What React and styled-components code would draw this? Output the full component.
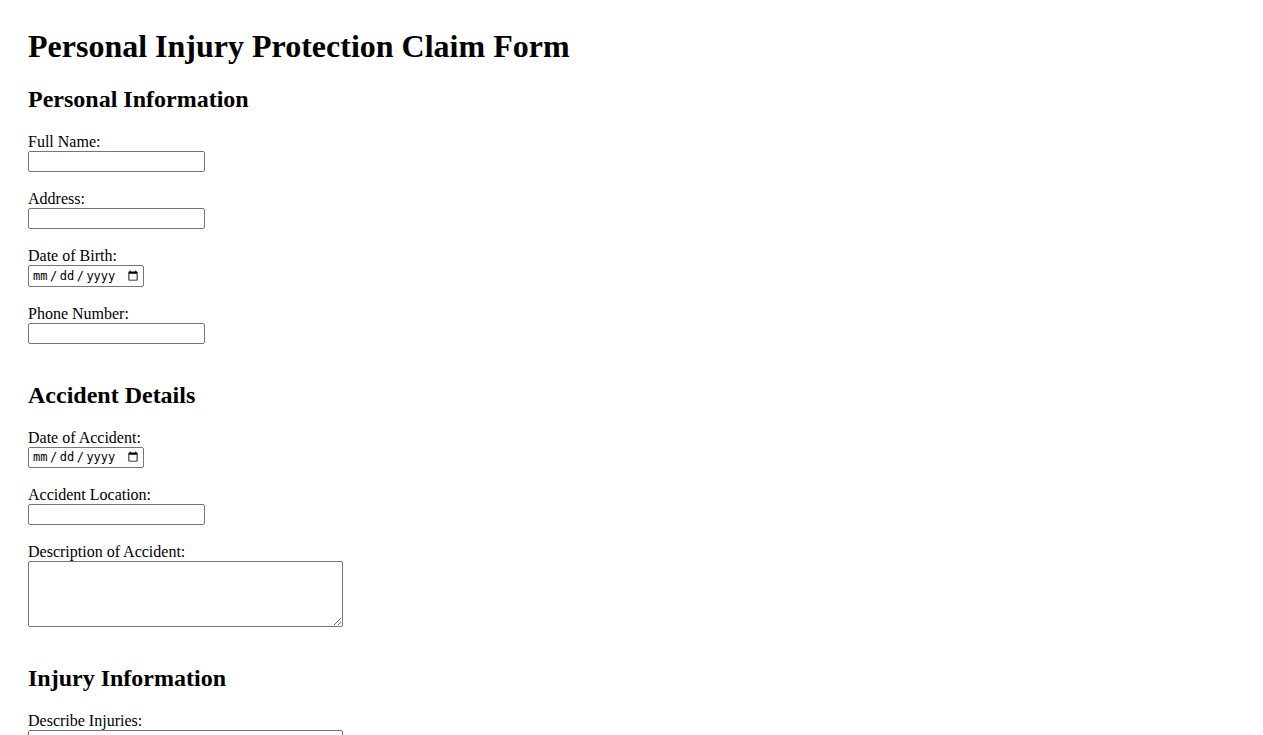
import React from "react";
import styled, { createGlobalStyle } from "styled-components";

const Global = createGlobalStyle`
  html, body { background: #fff; }
  body {
    margin: 8px;
    padding: 20px;
    font-family: "Liberation Serif", "Times New Roman", serif;
    font-size: 16px;
    color: #000;
  }
`;

const Title = styled.h1`
  font-size: 32px;
  font-weight: bold;
  margin: 0 0 21px;
  line-height: normal;
`;

const Section = styled.section`
  display: flow-root;
  & + & {
    margin-top: 20px;
  }
`;

const SectionTitle = styled.h2`
  font-size: 24px;
  font-weight: bold;
  margin: 0 0 20px;
  line-height: normal;
`;

const Field = styled.div`
  margin-bottom: 18px;
`;

const Label = styled.label`
  display: block;
  line-height: normal;
`;

const TextInput = styled.input`
  display: block;
  box-sizing: border-box;
  width: ${(p) => (p.type === "date" ? "116px" : "177px")};
  height: ${(p) => (p.type === "date" ? "21.5px" : "21px")};
  margin: 0;
  padding: 1px 2px 1px 3px;
  border: 1px solid #767676;
  border-radius: 2px;
  background: #fff;
  font-family: ${(p) =>
    p.type === "date" ? '"DejaVu Sans Mono", "Liberation Mono", monospace' : '"Liberation Sans", Arial, sans-serif'};
  font-size: ${(p) => (p.type === "date" ? "12px" : "13.33px")};
  color: #000;

  &::-webkit-datetime-edit-text {
    padding: 0 1.5px;
  }
  &::-webkit-calendar-picker-indicator {
    margin-left: 4px;
  }
`;

const TextArea = styled.textarea`
  display: block;
  box-sizing: border-box;
  width: 315px;
  height: 66px;
  margin: 0;
  padding: 2px;
  border: 1px solid #767676;
  border-radius: 2px;
  font-family: "Liberation Mono", monospace;
  font-size: 13.33px;
`;

const fieldsBySection = [
  {
    title: "Personal Information",
    fields: [
      { label: "Full Name:", type: "text" },
      { label: "Address:", type: "text" },
      { label: "Date of Birth:", type: "date" },
      { label: "Phone Number:", type: "tel" },
    ],
  },
  {
    title: "Accident Details",
    fields: [
      { label: "Date of Accident:", type: "date" },
      { label: "Accident Location:", type: "text" },
      { label: "Description of Accident:", type: "textarea" },
    ],
  },
  {
    title: "Injury Information",
    fields: [{ label: "Describe Injuries:", type: "textarea" }],
  },
];

export default function App() {
  return (
    <>
      <Global />
      <form onSubmit={(e) => e.preventDefault()}>
        <Title>Personal Injury Protection Claim Form</Title>
        {fieldsBySection.map((s, si) => (
          <Section key={s.title}>
            <SectionTitle>{s.title}</SectionTitle>
            {s.fields.map((f, fi) => {
              const id = `f-${si}-${fi}`;
              return (
                <Field key={id}>
                  <Label htmlFor={id}>{f.label}</Label>
                  {f.type === "textarea" ? (
                    <TextArea id={id} />
                  ) : (
                    <TextInput id={id} type={f.type} />
                  )}
                </Field>
              );
            })}
          </Section>
        ))}
      </form>
    </>
  );
}
